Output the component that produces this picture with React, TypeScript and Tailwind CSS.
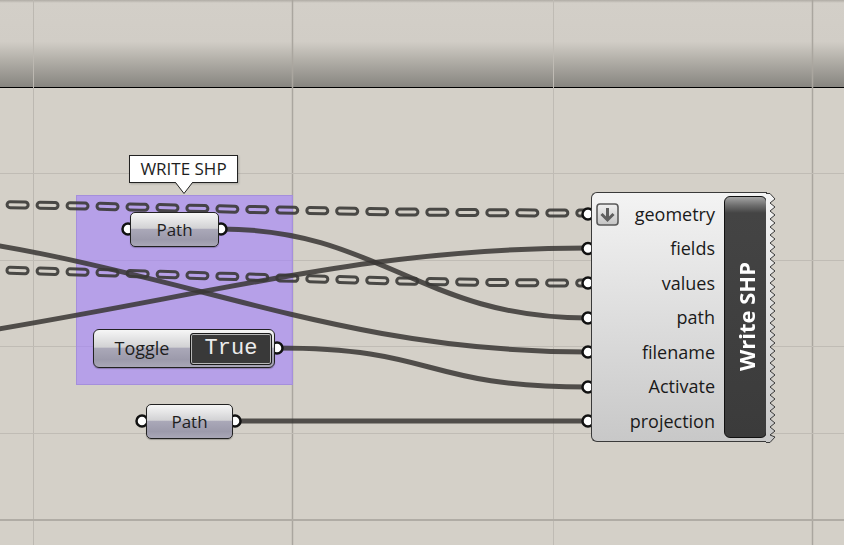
import React from 'react';

const inputs = ['geometry', 'fields', 'values', 'path', 'filename', 'Activate', 'projection'];
const rowY = [214, 248.5, 283, 318, 352, 387, 421];

const dashed = [
  'M -200 203 C 100 203, 250 213, 588 213',
  'M -200 268 C 100 268, 300 283, 588 283',
];

const solid = [
  'M -100 345 C 200 300, 350 248, 588 248',
  'M 221 229 C 380 229, 420 318, 588 318',
  'M -150 228 C 150 248, 300 352, 588 352',
  'M 277 348 C 440 348, 420 387, 588 387',
  'M 235 421 L 588 421',
];

const grips: [number, number][] = [
  [128, 229],
  [221, 229],
  [277, 348],
  [142, 421],
  [235, 421],
  ...rowY.map((y) => [588, y] as [number, number]),
];

function GridLines() {
  return (
    <svg className="absolute inset-0 pointer-events-none" width={844} height={545}>
      <line x1={33.5} y1={0} x2={33.5} y2={545} stroke="#bcb8b1" strokeWidth={1} />
      <line x1={292.5} y1={0} x2={292.5} y2={545} stroke="#aaa69f" strokeWidth={1.5} />
      <line x1={553.5} y1={0} x2={553.5} y2={545} stroke="#bfbbb4" strokeWidth={1} />
      <line x1={812.5} y1={0} x2={812.5} y2={545} stroke="#aaa69f" strokeWidth={1.5} />
      {[173.5, 260.5, 346.5, 433.5].map((y) => (
        <line key={y} x1={0} y1={y} x2={844} y2={y} stroke="#c0bcb5" strokeWidth={1} />
      ))}
      <line x1={0} y1={520} x2={844} y2={520} stroke="#b0aca5" strokeWidth={2} />
    </svg>
  );
}

function Wires() {
  return (
    <svg className="absolute inset-0 pointer-events-none" width={844} height={545}>
      <defs>
        {dashed.map((d, i) => (
          <mask key={i} id={`hole${i}`} maskUnits="userSpaceOnUse" x={-300} y={0} width={1200} height={545}>
            <rect x={-300} y={0} width={1200} height={545} fill="white" />
            <path d={d} fill="none" stroke="black" strokeWidth={3} strokeDasharray="15 15" strokeLinecap="round" />
          </mask>
        ))}
      </defs>
      {solid.map((d, i) => (
        <path key={i} d={d} fill="none" stroke="rgba(56,54,52,0.85)" strokeWidth={5} />
      ))}
      {dashed.map((d, i) => (
        <path
          key={i}
          d={d}
          fill="none"
          stroke="rgba(58,56,54,0.9)"
          strokeWidth={9}
          strokeDasharray="15 15"
          strokeLinecap="round"
          mask={`url(#hole${i})`}
        />
      ))}
      {grips.map(([x, y], i) => (
        <circle key={i} cx={x} cy={y} r={5.5} fill="#fff" stroke="#111" strokeWidth={2.5} />
      ))}
    </svg>
  );
}

const nodeFill =
  'bg-[linear-gradient(to_bottom,#f6f6f6_0%,#d2d2d4_46%,#aaa8b8_50%,#9c9aab_80%,#a9a7b7_100%)]';

function PathNode({ className }: { className: string }) {
  return (
    <div
      className={`absolute flex items-center justify-center rounded-[5px] border border-[#222] ${nodeFill} text-[17px] text-[#1e1e1e] shadow-[0_1px_1px_rgba(0,0,0,0.25)] ${className}`}
    >
      Path
    </div>
  );
}

function InputIcon() {
  return (
    <svg width={23} height={23} viewBox="0 0 23 23">
      <defs>
        <linearGradient id="icn" x1="0" y1="0" x2="0" y2="1">
          <stop offset="0" stopColor="#f0f0f0" />
          <stop offset="1" stopColor="#c4c4c4" />
        </linearGradient>
      </defs>
      <rect x={1} y={1} width={21} height={21} rx={3} fill="url(#icn)" stroke="#5a5a5a" strokeWidth={1.6} />
      <path d="M11.5 5 L11.5 16" stroke="#5e5e5e" strokeWidth={3} />
      <path d="M5.5 11 L11.5 17 L17.5 11" fill="none" stroke="#5e5e5e" strokeWidth={3} />
    </svg>
  );
}

function Zigzag() {
  let d = 'M0 0.5 L4 0.5 L9 6';
  let y = 6;
  let out = true;
  while (y < 240) {
    y += 4;
    out = !out;
    d += ` L${out ? 9 : 4} ${y}`;
  }
  d += ' L9 244 L4 249.5 L0 249.5';
  return (
    <svg className="absolute right-[-10px] top-0" width={11} height={250}>
      <defs>
        <linearGradient id="zz" x1="0" y1="0" x2="0" y2="1">
          <stop offset="0" stopColor="#f3f3f3" />
          <stop offset="1" stopColor="#c8c8c8" />
        </linearGradient>
      </defs>
      <path d={d} fill="url(#zz)" stroke="#3a3a3a" strokeWidth={1} />
    </svg>
  );
}

function WriteShp() {
  return (
    <div className="absolute left-[591px] top-[192px] flex h-[250px] w-[176px] rounded-l-[6px] border-y border-l border-[#3a3a3a] bg-[linear-gradient(to_bottom,#f3f3f3,#c8c8c8)]">
      <div className="flex w-[132px] flex-col pt-[4px]">
        {inputs.map((name, i) => (
          <div
            key={name}
            className={`flex h-[34.5px] items-center pr-[9px] text-[18px] text-[#1a1a1a] ${i === 0 ? 'justify-between pl-[4px]' : 'justify-end'}`}
          >
            {i === 0 && <InputIcon />}
            <span>{name}</span>
          </div>
        ))}
      </div>
      <div className="my-[3px] flex w-[43px] items-center justify-center rounded-[6px] border border-[#111] bg-[linear-gradient(to_bottom,#a5a5a5_0px,#707070_8px,#444_16px,#3b3b3b_100%)]">
        <span className="rotate-180 text-[22px] font-bold leading-none text-white [writing-mode:vertical-rl]">
          Write SHP
        </span>
      </div>
      <Zigzag />
    </div>
  );
}

export default function App() {
  return (
    <div className="relative h-[545px] w-[844px] overflow-hidden bg-[#d4d0c8] font-['Open_Sans',sans-serif]">
      <div className="h-[88px] border-b border-black bg-[linear-gradient(to_bottom,#b0aca5_0px,#d3cfc8_3px,#d1cdc6_48%,#aeaba4_72%,#878580_100%)]" />
      <GridLines />

      {/* group */}
      <div className="absolute left-[76px] top-[195px] h-[190px] w-[217px] border border-[#a58fdc] bg-[rgba(162,128,253,0.6)]" />

      <Wires />

      {/* group label */}
      <div className="absolute left-[129px] top-[155px] flex h-[28px] w-[109px] items-center justify-center border border-[#222] bg-white text-[17px] text-[#1e1e1e] shadow-[1px_1px_2px_rgba(0,0,0,0.2)]">
        WRITE SHP
      </div>
      <svg className="absolute left-[175px] top-[182px]" width={18} height={13}>
        <path d="M0.5 0 L9 11.5 L17.5 0 Z" fill="#fff" />
        <path d="M0.5 0.5 L9 11.5 L17.5 0.5" fill="none" stroke="#222" strokeWidth={1} />
      </svg>

      <PathNode className="left-[130px] top-[212px] h-[35px] w-[89px]" />
      <PathNode className="left-[146px] top-[404px] h-[35px] w-[87px]" />

      {/* toggle */}
      <div
        className={`absolute left-[93px] top-[329px] flex h-[39px] w-[182px] items-center rounded-[6px] border border-[#222] ${nodeFill} shadow-[0_1px_1px_rgba(0,0,0,0.25)]`}
      >
        <div className="flex flex-1 justify-center text-[18px] text-[#1e1e1e]">Toggle</div>
        <div className="mr-[2px] flex h-[32px] w-[82px] items-center justify-center rounded-[3px] border border-[#1a1a1a] bg-[#393939] font-['Liberation_Mono',monospace] text-[22px] text-[#ececec] shadow-[inset_0_0_0_1px_#b8b8b8]">
          True
        </div>
      </div>

      <WriteShp />
    </div>
  );
}
